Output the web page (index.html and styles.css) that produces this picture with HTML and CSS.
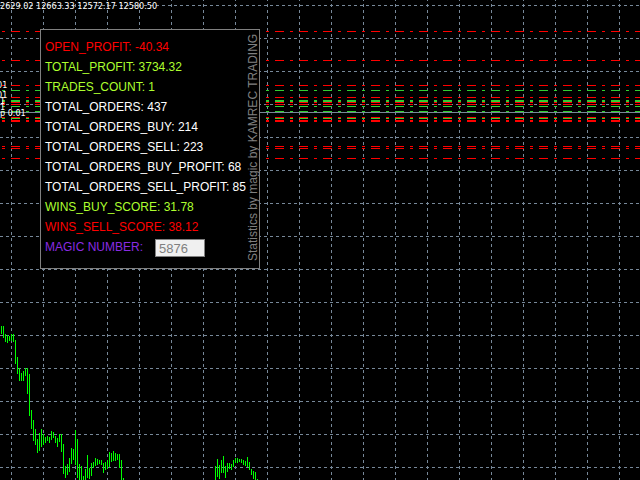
FILE: index.html
```html
<!DOCTYPE html>
<html lang="en">
<head>
<meta charset="utf-8">
<title>Statistics by magic</title>
<link rel="stylesheet" href="styles.css">
</head>
<body>
<main class="chart">
  <svg class="plot" aria-hidden="true" shape-rendering="crispEdges">
    <defs>
      <pattern id="grid-rows" width="6" height="33" patternUnits="userSpaceOnUse"><rect class="grid" y="5" width="3" height="1"/></pattern>
      <pattern id="grid-cols" y="4" width="32" height="6" patternUnits="userSpaceOnUse"><rect class="grid" x="11" width="1" height="3"/></pattern>
      <pattern id="sell" x="11" width="24" height="1" patternUnits="userSpaceOnUse"><path class="sell" d="M0 0h9v1H0zM15 0h3v1h-3z"/></pattern>
      <pattern id="buy" x="11" width="24" height="1" patternUnits="userSpaceOnUse"><path class="buy" d="M0 0h9v1H0zM15 0h3v1h-3z"/></pattern>
    </defs>
    <rect width="100%" height="100%" fill="url(#grid-rows)"/>
    <rect width="100%" height="100%" fill="url(#grid-cols)"/>
    <g fill="url(#sell)">
      <rect y="31" width="100%" height="1"/>
      <rect y="60" width="100%" height="1"/>
      <rect y="85" width="100%" height="1"/>
      <rect y="97" width="100%" height="1"/>
      <rect y="102" width="100%" height="1"/>
      <rect y="104" width="100%" height="1"/>
      <rect y="117" width="100%" height="1"/>
      <rect y="120" width="100%" height="2"/>
      <rect y="146" width="100%" height="1"/>
      <rect y="148" width="100%" height="1"/>
      <rect y="158" width="100%" height="1"/>
    </g>
    <g fill="url(#buy)">
      <rect y="90" width="100%" height="1"/>
      <rect y="100" width="100%" height="2"/>
      <rect y="106" width="100%" height="1"/>
      <rect y="111" width="100%" height="1"/>
      <rect y="118" width="100%" height="1"/>
    </g>
    <rect class="grid" y="112" width="100%" height="1"/>
    <path class="bars" transform="translate(.5 0)" d="M1 326V334M3 326V338M5 334V342M7 335V343M9 336V341M11 334V341M13 334V342M15 340V364M17 357V374M19 368V381M21 373V381M23 371V381M25 368V376M27 368V394M29 374V416M31 410V429M33 420V441M35 429V445M37 439V453M39 433V451M41 429V447M43 434V445M45 437V443M47 436V441M49 437V443M51 431V440M53 432V438M55 436V443M57 438V447M59 434V442M61 434V452M63 444V474M65 466V478M67 464V475M69 458V472M71 448V464M73 449V460M75 430V465M77 439V478M79 464V480M81 466V480M83 476V480M85 469V480M87 455V478M89 468V479M91 463V476M93 462V468M95 458V466M97 459V465M99 460V464M101 460V465M103 463V473M105 462V470M107 460V469M109 452V467M111 453V462M113 451V461M115 453V461M117 454V460M119 454V468M121 460V480M123 478V480M215 466V480M217 459V477M219 465V479M221 460V473M223 456V473M225 466V478M227 463V472M229 463V469M231 464V470M233 460V467M235 458V463M237 458V463M239 459V462M241 459V463M243 460V465M245 461V466M247 457V467M249 462V470M251 469V475M253 471V479M255 472V480M257 479V480"/>
  </svg>
  <div class="quote">2629.02 12663.33 12572.17 12580.50</div>
  <span class="order order-a">01</span>
  <span class="order order-b">01</span>
  <span class="order order-c">1</span>
  <span class="order order-d">1</span>
  <span class="order order-e">p 0.01</span>

  <section class="panel">
    <div class="stats">
      <div class="row loss">OPEN_PROFIT: -40.34</div>
      <div class="row gain">TOTAL_PROFIT: 3734.32</div>
      <div class="row gain">TRADES_COUNT: 1</div>
      <div class="row">TOTAL_ORDERS: 437</div>
      <div class="row">TOTAL_ORDERS_BUY: 214</div>
      <div class="row">TOTAL_ORDERS_SELL: 223</div>
      <div class="row">TOTAL_ORDERS_BUY_PROFIT: 68</div>
      <div class="row">TOTAL_ORDERS_SELL_PROFIT: 85</div>
      <div class="row gain">WINS_BUY_SCORE: 31.78</div>
      <div class="row loss">WINS_SELL_SCORE: 38.12</div>
      <div class="row magic"><label for="magic">MAGIC NUMBER:</label><input id="magic" type="text" value="5876"></div>
    </div>
    <div class="credit">Statistics by magic by KAMREC TRADING</div>
  </section>
</main>
</body>
</html>
```
FILE: styles.css
```css
body {
  margin: 0;
  background: #000;
  color: #fff;
  font: 12px/20px "Liberation Sans", Arial, sans-serif;
}

.chart {
  position: relative;
  min-height: 100vh;
  overflow: hidden;
}

.plot {
  position: absolute;
  inset: 0;
  width: 100%;
  height: 100%;
}

.grid { fill: #778899; }
.sell { fill: #ff0000; }
.buy { fill: #32cd32; }
.bars { stroke: #00ff00; stroke-width: 1; }

.quote,
.order {
  position: absolute;
  left: 0;
  font: 9px/12px "DejaVu Sans Condensed", "DejaVu Sans", sans-serif;
  white-space: nowrap;
}

.quote { top: 0; }
.order-a { top: 79px; left: -3px; }
.order-b { top: 89px; left: -3px; }
.order-c { top: 95px; }
.order-d { top: 101px; }
.order-e { top: 107px; }

.panel {
  position: absolute;
  top: 29px;
  left: 40px;
  box-sizing: border-box;
  width: 220px;
  display: flex;
  padding: 7px 0 11px 4px;
  border: 1px solid #808080;
  background: #000;
}

.stats {
  flex: 1;
  min-width: 0;
}

.row {
  white-space: nowrap;
}

.gain { color: #adff2f; }
.loss { color: #ff0000; }

.magic {
  display: flex;
  align-items: center;
  color: #8a2be2;
}

.magic label {
  width: 110px;
}

.magic input {
  box-sizing: border-box;
  width: 50px;
  height: 18px;
  margin: 2px 0 0;
  padding: 0 3px;
  border: 1px solid #808080;
  border-radius: 0;
  background: #f0f0f0;
  color: #808080;
  font: 13px/16px "Liberation Sans", Arial, sans-serif;
}

.credit {
  writing-mode: vertical-rl;
  transform: rotate(180deg);
  margin: -4px 0;
  color: #808080;
  line-height: 11px;
  white-space: nowrap;
}
```
